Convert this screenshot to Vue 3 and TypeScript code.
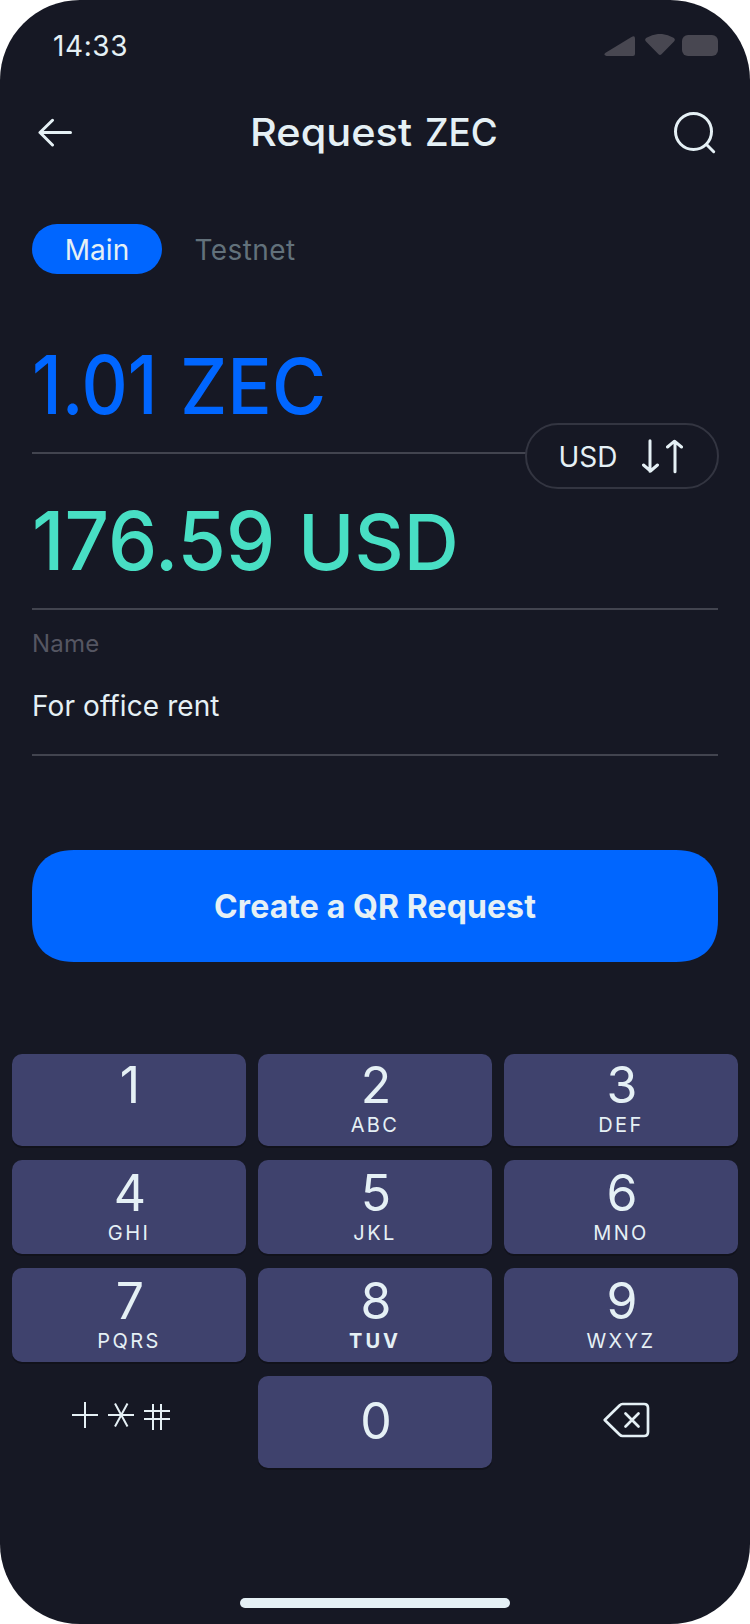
<script setup lang="ts">
import { ref } from 'vue'

interface Key {
  digit: string
  letters: string
}

const network = ref<'Main' | 'Testnet'>('Main')
const rows: Key[][] = [
  [{ digit: '1', letters: '' }, { digit: '2', letters: 'ABC' }, { digit: '3', letters: 'DEF' }],
  [{ digit: '4', letters: 'GHI' }, { digit: '5', letters: 'JKL' }, { digit: '6', letters: 'MNO' }],
  [{ digit: '7', letters: 'PQRS' }, { digit: '8', letters: 'TUV' }, { digit: '9', letters: 'WXYZ' }],
]
</script>

<template>
  <main class="screen">
    <div class="status">
      <span class="time">14:33</span>
      <svg class="status-icons" width="114" height="22" viewBox="0 0 114 22">
        <path d="M2 18.500 27.500 3Q31 1 31 4.500V20Q31 22 29 22H2.500Q-1.500 21 2 18.500Z" />
        <path d="M42 7.500Q40 5.500 42.500 3.800Q56 -4 69.500 3.800Q72 5.500 70 7.500L57.500 20.300Q56 21.700 54.500 20.300Z" />
        <rect x="78" y="1" width="36" height="21" rx="6" />
      </svg>
    </div>

    <header class="bar">
      <svg class="back" width="36" height="30" viewBox="0 0 36 30">
        <path d="M33.500 15.500H3M15.500 3.300 3 15.500 15.500 28" />
      </svg>
      <h1 class="title"><span class="request">Request</span><span class="zec">ZEC</span></h1>
      <svg class="search" width="44" height="44" viewBox="0 0 44 44">
        <circle cx="19.500" cy="21.500" r="18" /><path d="m32.500 34.500 7.200 7.200" />
      </svg>
    </header>

    <nav class="tabs">
      <button class="tab" :class="{ active: network === 'Main' }" @click="network = 'Main'">Main</button>
      <button class="tab test" :class="{ active: network === 'Testnet' }" @click="network = 'Testnet'">Testnet</button>
    </nav>

    <section class="form">
      <div class="amount crypto">
        <span class="number">1.01</span><span class="unit">ZEC</span>
        <button class="swap">
          <span>USD</span>
          <svg width="42" height="36" viewBox="0 0 42 36">
            <path d="M8 2.800V33.300M1.500 27 8.500 33 15.500 27M33 33.800V3.500M25.500 9 32.500 3.200 39.500 9" />
          </svg>
        </button>
      </div>
      <div class="amount fiat"><span class="number">176.59</span><span class="unit">USD</span></div>
      <label class="field">
        <span class="label">Name</span>
        <span class="value">For office rent</span>
      </label>
    </section>

    <button class="create">Create a QR Request</button>

    <section class="keypad">
      <div v-for="(row, i) in rows" :key="i" class="row" :class="{ short: i === 0 }">
        <button v-for="key in row" :key="key.digit" class="key">
          <span class="digit">{{ key.digit }}</span>
          <span class="letters" :class="{ bold: key.letters === 'TUV' }">{{ key.letters }}</span>
        </button>
      </div>
      <div class="row short">
        <div class="plain symbols">
          <svg width="98" height="30" viewBox="0 0 98 30">
            <path d="M0 14H26M13 1V27M36 14H62M43 2.500 55.500 25.500M55.500 2.500 43 25.500M72 10H98M72 18H98M81 3V29M89 3V29" />
          </svg>
        </div>
        <button class="key zero"><span class="digit">0</span></button>
        <div class="plain erase">
          <svg width="48" height="36" viewBox="0 0 48 36">
            <path d="M2.700 18 17.500 3.500Q19 2 20.500 2H42Q46 2 46 6V30Q46 34 42 34H20.500Q19 34 17.500 32.500Z" />
            <path d="m23.500 11.500 13 13m0-13-13 13" />
          </svg>
        </div>
      </div>
    </section>
    <div class="home"></div>
  </main>
</template>

<style>
body { background: #fff; }
</style>

<style scoped>
* { box-sizing: border-box; }
button { border: 0; padding: 0; margin: 0; background: none; color: inherit; font: inherit; }
svg { display: block; fill: none; stroke: #e5f0f5; stroke-width: 3; stroke-linecap: round; stroke-linejoin: round; }
.screen {
  display: flex; flex-direction: column; width: 750px; height: 1624px; overflow: hidden;
  background: #161824; border-radius: 80px; color: #e5f0f5;
  font-family: Inter, "Liberation Sans", sans-serif; font-size: 28px; white-space: nowrap;
}
.status { display: flex; justify-content: space-between; height: 92px; padding: 34px 32px 0 53px; }
.time { line-height: 24px; letter-spacing: .6px; }
.status-icons { fill: #484751; stroke: none; }
.bar { display: flex; align-items: center; height: 80px; padding: 0 32px 0 37px; }
.title { display: flex; flex: 1; margin: 0 0 0 177px; font-size: 38.500px; font-weight: 500; line-height: 80px; }
.request { width: 175px; transform: scaleX(1.077); transform-origin: left; }
.zec { transform: scaleX(.955); transform-origin: left; }
.tabs { display: flex; gap: 32.500px; margin: 52px 32px 0; height: 50px; }
.tab { height: 50px; color: #62717b; line-height: 52px; }
.tab.active { width: 130px; background: #0066ff; border-radius: 25px; color: #e5f0f5; }
.test { letter-spacing: .4px; }
.form { margin: 24px 32px 0; }
.amount { position: relative; display: flex; height: 156px; border-bottom: 2px solid #42444f; font-size: 77px; font-weight: 500; line-height: 176px; }
.number { font-size: 80.500px; line-height: 174px; transform-origin: left; }
.unit { transform-origin: left; }
.crypto { color: #0066ff; }
.crypto .number { width: 147.500px; transform: scaleX(.89); }
.crypto .unit { transform: scaleX(.96); }
.fiat { color: #48dfc4; }
.fiat .number { width: 266px; transform: scaleX(.972); }
.fiat .unit { transform: scaleX(.99); }
.swap {
  position: absolute; right: -1px; top: 125px; width: 194px; height: 66px; display: flex; align-items: center; gap: 24.300px;
  padding-left: 31.500px; border: 2px solid #333541; border-radius: 33px; background: #161824;
  color: #e5f0f5; font-size: 28px; font-weight: 400; line-height: 64px;
}
.swap span { padding-top: 2px; }
.field { display: flex; flex-direction: column; height: 146px; border-bottom: 2px solid #42444f; }
.label { margin-top: 17px; color: #555662; font-size: 24px; line-height: 34px; letter-spacing: .2px; }
.value { margin-top: 25px; line-height: 40px; letter-spacing: .1px; }
.create {
  width: 686px; height: 112px; margin: 94px 32px 92px; background: #0066ff;
  clip-path: path("M0 42C0 15 15 0 42 0H644C671 0 686 15 686 42V70C686 97 671 112 644 112H42C15 112 0 97 0 70Z");
  font-size: 32px; font-weight: 700; line-height: 114px; letter-spacing: .1px;
}
.keypad { display: grid; gap: 14px; padding: 0 12px; }
.row { display: grid; grid-template-columns: repeat(3, 234px); gap: 12px; height: 94px; }
.row.short { height: 92px; }
.key { display: flex; flex-direction: column; align-items: center; border-radius: 10px; background: #3f426d; box-shadow: 0 2px 0 #11121b; }
.digit { font-size: 50px; line-height: 36px; margin-top: 15px; padding-left: 2px; }
.short .digit { margin-top: 13px; }
.short .zero .digit { margin-top: 27px; }
.letters { margin-top: 14px; font-size: 20px; line-height: 16px; letter-spacing: 2.400px; }
.letters.bold { font-weight: 700; letter-spacing: 3px; }
.symbols { padding: 25px 0 0 60px; }
.symbols svg { stroke-width: 2; stroke-linecap: butt; }
.erase { padding: 26px 0 0 98px; }
.erase svg { stroke-width: 2.700; }
.home { width: 270px; height: 10px; margin: 130px auto 0; border-radius: 5px; background: #e5f0f5; }
</style>
